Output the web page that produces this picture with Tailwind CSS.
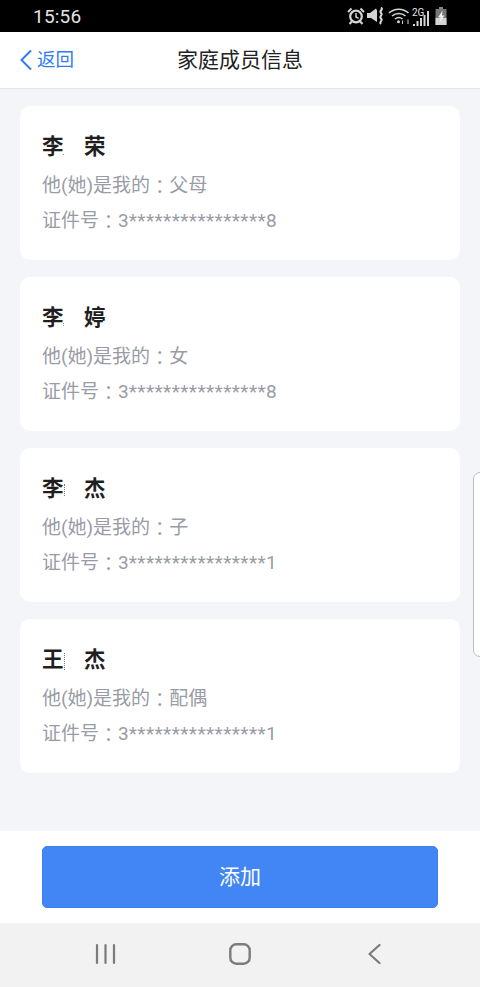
<!DOCTYPE html>
<html lang="zh">
<head>
<meta charset="utf-8">
<script src="https://cdn.jsdelivr.net/npm/@tailwindcss/browser@4"></script>
</head>
<body class="m-0">
<div class="relative flex flex-col w-[480px] h-[987px] overflow-hidden bg-[#f4f5f9] font-['Roboto','Noto_Sans_CJK_SC',sans-serif]">
  <!-- status bar -->
  <div class="relative flex items-center h-[32px] bg-black pl-[33px] text-[#e4e4e4]">
    <span class="text-[19px] leading-none tracking-[0.2px]">15:56</span>
    <div class="absolute left-[347px] top-[7px] flex items-start">
      <svg width="18" height="18" viewBox="0 0 18 18" fill="none" stroke="#d4d4d4"><circle cx="9" cy="9.500" r="5.800" stroke-width="2.200"/><path d="M9 6v4l2.600 1.300" stroke-width="1.500"/><path d="M1 5 4.500 1.500M17 5 13.500 1.500M4.800 14.500 2.500 17M13.200 14.500 15.500 17" stroke-width="2"/></svg>
      <svg class="ml-[2px]" width="18" height="18" viewBox="0 0 18 18" fill="none"><path d="M0 6h3l6-4.500 1 2V15L4 11H0z" fill="#d4d4d4"/><path d="M14 0.500c3 2.200-2.500 3.200 0 5.500s-2.500 3.200 0 5.500-2.500 3.200 0 5.500" stroke="#dcdcdc" stroke-width="2"/></svg>
      <svg class="ml-[3px]" width="23" height="18" viewBox="0 0 23 18" fill="none" stroke="#d4d4d4" stroke-width="1.600"><path d="M1 6c5.500-5 14-5 19.500 0M4 9c3.800-3.400 9.700-3.400 13.500 0M7 12c2.200-1.800 5.300-1.800 7.500 0"/><circle cx="10.500" cy="14.800" r="1.500" fill="#d4d4d4" stroke="none"/><path d="M14.500 13.500v3.500M20 17v-4.500" stroke-width="1"/></svg>
      <div class="relative w-[20px] h-[20px]">
        <span class="absolute left-[1px] top-[1px] text-[10px] leading-none text-[#e4e4e4]">2G</span>
        <svg class="absolute left-0 top-0" width="20" height="20" viewBox="0 0 20 20" fill="#d4d4d4"><rect x="2" y="17" width="2" height="2"/><rect x="5.500" y="14" width="2" height="5"/><rect x="9" y="11" width="2" height="8"/><rect x="12.500" y="8" width="2" height="11"/><rect x="16" y="4" width="2" height="15"/></svg>
      </div>
      <svg class="ml-[4px]" width="12" height="19" viewBox="0 0 12 19"><rect x="4" y="0" width="4" height="2" fill="#8a8a8a"/><rect x="0.500" y="2" width="11" height="16" fill="#777"/><rect x="0.500" y="11" width="11" height="7" fill="#d4d4d4"/><path d="M7.500 3.500 3 10.500h2.500L4.500 16 9.500 8.500H7z" fill="#eee"/></svg>
    </div>
  </div>

  <!-- header -->
  <header class="relative flex items-center justify-center h-[57px] bg-white border-b border-[#e1e4ed]">
    <div class="absolute left-[20px] top-0 h-full flex items-center gap-[5px] text-[#2f7cf0]">
      <svg width="12" height="22" viewBox="0 0 12 22" fill="none" stroke="#2f7cf0" stroke-width="2"><path d="M11 1.500 1.500 11l9.500 9.500"/></svg>
      <span class="text-[18.500px] leading-none">返回</span>
    </div>
    <h1 class="text-[21px] font-normal leading-none text-[#222]">家庭成员信息</h1>
  </header>

  <!-- list -->
  <main class="flex-1 flex flex-col gap-[17px] pt-[17px] px-[20px]">
    <section class="h-[154px] rounded-[10px] bg-white pl-[22px] pt-[28px]">
      <div class="flex h-[26px] items-center text-[21.500px] font-bold leading-none text-[#1f1f1f]"><span class="relative w-[43px] -ml-[1px] pl-[1px]">李<i class="absolute left-[22px] top-[18px] w-[1px] h-[1px] bg-[#999]"></i></span><span>荣</span></div>
      <p class="mt-[13px] text-[19px] leading-[26px] text-[#999ca5]">他(她)是我的<span lang="zh-TW" class="relative top-[2px] leading-none font-['Noto_Sans_CJK_TC']">：</span>父母</p>
      <p class="mt-[9px] text-[19px] leading-[26px] text-[#999ca5]">证件号<span lang="zh-TW" class="relative top-[2px] leading-none font-['Noto_Sans_CJK_TC']">：</span>3<span class="tracking-[0.4px]">****************</span>8</p>
    </section>
    <section class="h-[154px] rounded-[10px] bg-white pl-[22px] pt-[28px]">
      <div class="flex h-[26px] items-center text-[21.500px] font-bold leading-none text-[#1f1f1f]"><span class="relative w-[43px] -ml-[1px] pl-[1px]">李<i class="absolute left-[22px] top-[16px] w-[1px] h-[3px] border-l border-dotted border-[#999]"></i></span><span>婷</span></div>
      <p class="mt-[13px] text-[19px] leading-[26px] text-[#999ca5]">他(她)是我的<span lang="zh-TW" class="relative top-[2px] leading-none font-['Noto_Sans_CJK_TC']">：</span>女</p>
      <p class="mt-[9px] text-[19px] leading-[26px] text-[#999ca5]">证件号<span lang="zh-TW" class="relative top-[2px] leading-none font-['Noto_Sans_CJK_TC']">：</span>3<span class="tracking-[0.4px]">****************</span>8</p>
    </section>
    <section class="h-[154px] rounded-[10px] bg-white pl-[22px] pt-[28px]">
      <div class="flex h-[26px] items-center text-[21.500px] font-bold leading-none text-[#1f1f1f]"><span class="relative w-[43px] -ml-[1px] pl-[1px]">李<i class="absolute left-[23px] top-[6px] w-[1px] h-[12px] border-l border-dotted border-[#777]"></i></span><span>杰</span></div>
      <p class="mt-[13px] text-[19px] leading-[26px] text-[#999ca5]">他(她)是我的<span lang="zh-TW" class="relative top-[2px] leading-none font-['Noto_Sans_CJK_TC']">：</span>子</p>
      <p class="mt-[9px] text-[19px] leading-[26px] text-[#999ca5]">证件号<span lang="zh-TW" class="relative top-[2px] leading-none font-['Noto_Sans_CJK_TC']">：</span>3<span class="tracking-[0.4px]">****************</span>1</p>
    </section>
    <section class="h-[154px] rounded-[10px] bg-white pl-[22px] pt-[28px]">
      <div class="flex h-[26px] items-center text-[21.500px] font-bold leading-none text-[#1f1f1f]"><span class="relative w-[43px] -ml-[1px] pl-[1px]">王<i class="absolute left-[23px] top-[4px] w-[1px] h-[17px] border-l border-dotted border-[#777]"></i></span><span>杰</span></div>
      <p class="mt-[13px] text-[19px] leading-[26px] text-[#999ca5]">他(她)是我的<span lang="zh-TW" class="relative top-[2px] leading-none font-['Noto_Sans_CJK_TC']">：</span>配偶</p>
      <p class="mt-[9px] text-[19px] leading-[26px] text-[#999ca5]">证件号<span lang="zh-TW" class="relative top-[2px] leading-none font-['Noto_Sans_CJK_TC']">：</span>3<span class="tracking-[0.4px]">****************</span>1</p>
    </section>
  </main>

  <!-- footer -->
  <footer class="h-[92px] bg-white px-[42px] pt-[15px]">
    <button class="w-full h-[62px] rounded-[5px] bg-[#4285f4] border border-[#3c80f0] text-white text-[21px] leading-none">添加</button>
  </footer>

  <!-- nav bar -->
  <nav class="flex items-center h-[64px] bg-[#f2f2f2]">
    <div class="w-full flex justify-between items-center pl-[95px] pr-[99px] pb-[2px]">
      <svg width="21" height="22" viewBox="0 0 21 22" stroke="#7b7b7b" stroke-width="2.200" stroke-linecap="round"><path d="M2 2v18M10.500 2v18M19 2v18"/></svg>
      <svg class="mr-[4px]" width="22" height="22" viewBox="0 0 22 22" fill="none" stroke="#7b7b7b" stroke-width="2.400"><rect x="1.300" y="1.300" width="19.400" height="19.400" rx="6"/></svg>
      <svg width="13" height="22" viewBox="0 0 13 22" fill="none" stroke="#7b7b7b" stroke-width="2.200" stroke-linecap="round" stroke-linejoin="round"><path d="M11.500 2 1.500 11l10 9"/></svg>
    </div>
  </nav>

  <!-- edge handle overlay -->
  <div class="absolute left-[473px] top-[472px] w-[10px] h-[185px] rounded-l-[7px] bg-white border border-[#bdbdbd]"></div>
</div>
</body>
</html>
